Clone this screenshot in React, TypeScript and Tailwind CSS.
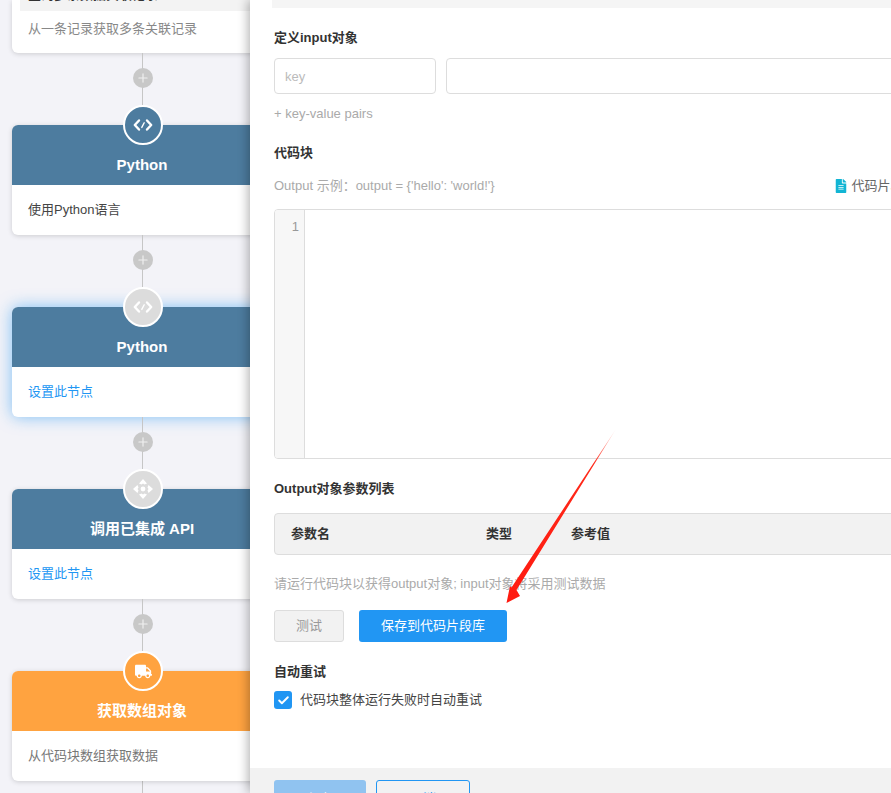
import React from 'react';
import { Check, Plus } from 'lucide-react';
import { FaFileAlt, FaTruck } from 'react-icons/fa';

const font = { fontFamily: '"Liberation Sans", "Noto Sans CJK SC", sans-serif' };

const CodeIcon = () => (
  <svg width="22" height="22" viewBox="0 0 22 22" fill="none" stroke="white" strokeWidth="2.4" strokeLinecap="round" strokeLinejoin="round">
    <path d="M7 6.5 L2.8 11 L7 15.5" />
    <path d="M15 6.5 L19.2 11 L15 15.5" />
    <path d="M12.2 8.8 L9.8 13.4" strokeWidth="1.4" />
  </svg>
);

const MoveIcon = () => (
  <svg width="22" height="22" viewBox="0 0 22 22" fill="white">
    <path d="M11 1 L15 5.5 L12.5 6.5 L11 5.5 L9.5 6.5 L7 5.5 Z" />
    <path d="M11 21 L15 16.5 L12.5 15.5 L11 16.5 L9.5 15.5 L7 16.5 Z" />
    <path d="M1 11 L5.5 7 L6.5 9.5 L5.5 11 L6.5 12.5 L5.5 15 Z" />
    <path d="M21 11 L16.5 7 L15.5 9.5 L16.5 11 L15.5 12.5 L16.5 15 Z" />
    <circle cx="11" cy="11" r="2.4" />
  </svg>
);

const Connector = () => (
  <div className="relative flex h-[72px] w-[260px] flex-col items-center">
    <div className="absolute bottom-0 left-[130px] top-0 w-px bg-[#c6c6c6]" />
    <div className="relative z-10 mt-[15px] ml-px flex h-5 w-5 items-center justify-center rounded-full bg-[#c8c8c8]">
      <Plus size={14} color="#f0f0f0" strokeWidth={2} />
    </div>
  </div>
);

type NodeProps = {
  title: string;
  desc: string;
  descClass: string;
  headClass: string;
  circleClass: string;
  icon: React.ReactNode;
  active?: boolean;
};

const FlowNode = ({ title, desc, descClass, headClass, circleClass, icon, active }: NodeProps) => (
  <div className={`relative w-[260px] rounded-md bg-white ${active ? 'shadow-[0_0_16px_rgba(33,150,243,0.55)]' : 'shadow-[0_1px_5px_rgba(0,0,0,0.16)]'}`}>
    <div className={`h-[60px] rounded-t-md pt-[31px] text-center text-[15px] font-bold leading-[18px] text-white ${headClass}`}>{title}</div>
    <div className={`flex h-[50px] items-center px-4 pb-px text-[13px] ${descClass}`}>{desc}</div>
    <div className={`absolute left-[111px] top-[-20px] flex h-10 w-10 items-center justify-center rounded-full border-2 border-white ${circleClass}`}>{icon}</div>
  </div>
);

const Label = ({ children }: { children: React.ReactNode }) => (
  <div className="h-5 text-[13px] font-bold leading-[22px] text-[#333]">{children}</div>
);

export default function App() {
  return (
    <div className="relative flex h-[793px] w-[891px] overflow-hidden bg-[#f3f3f8]" style={font}>
      {/* flow canvas */}
      <div className="w-[250px] shrink-0 pl-3">
        <div className="h-[53px] w-[260px] overflow-hidden rounded-b-md bg-white shadow-[0_1px_5px_rgba(0,0,0,0.16)]">
          <div className="ml-2 h-[11px] overflow-hidden bg-[#f3f3f3] pl-2">
            <div className="mt-[-13px] text-[13px] font-bold leading-[15px] text-[#333]">查询多条数据关联记录</div>
          </div>
          <div className="flex h-[36px] items-center px-4 text-[13px] text-[#888]">从一条记录获取多条关联记录</div>
        </div>
        <Connector />
        <FlowNode title="Python" desc="使用Python语言" descClass="text-[#444]" headClass="bg-[#4d7c9f]" circleClass="bg-[#4d7c9f]" icon={<CodeIcon />} />
        <Connector />
        <FlowNode title="Python" desc="设置此节点" descClass="text-[#2196f3]" headClass="bg-[#4d7c9f]" circleClass="bg-[#dcdcdc]" icon={<CodeIcon />} active />
        <Connector />
        <FlowNode title="调用已集成 API" desc="设置此节点" descClass="text-[#2196f3]" headClass="bg-[#4d7c9f]" circleClass="bg-[#dcdcdc]" icon={<MoveIcon />} />
        <Connector />
        <FlowNode title="获取数组对象" desc="从代码块数组获取数据" descClass="text-[#777]" headClass="bg-[#ffa340]" circleClass="bg-[#ffa340]" icon={<FaTruck size={17} color="white" />} />
        <div className="ml-[130px] h-3 w-px bg-[#c6c6c6]" />
      </div>

      {/* settings drawer */}
      <div className="relative z-10 flex h-full w-[800px] shrink-0 flex-col bg-white shadow-[-2px_0_10px_rgba(0,0,0,0.3)]">
        <div className="flex-1 pl-6">
          <div className="ml-[-2px] h-2 bg-[#f5f5f5]" />
          <div className="mt-[19px]"><Label>定义input对象</Label></div>
          <div className="mt-[11px] flex gap-[10px]">
            <div className="flex h-9 w-[162px] items-center rounded border border-[#ddd] px-[10px] pt-px text-[13px] text-[#bbb]">key</div>
            <div className="h-9 flex-1 rounded border border-[#ddd]" />
          </div>
          <div className="mt-[9px] h-5 text-[13px] leading-[22px] text-[#aaa]">+ key-value pairs</div>
          <div className="mt-[19px]"><Label>代码块</Label></div>
          <div className="mt-[13px] flex h-5 items-center pt-px text-[13px] leading-5 text-[#aaa]">
            <span>Output 示例：output = {"{'hello': 'world!'}"}</span>
            <span className="ml-[339px] flex items-center gap-[4px] text-[#666]">
              <FaFileAlt size={14} color="#12b5d4" />
              代码片段库
            </span>
          </div>
          <div className="mt-[14px] flex h-[250px] overflow-hidden rounded border border-[#ddd]">
            <div className="h-full w-[30px] border-r border-[#ddd] bg-[#f7f7f7] pr-[5px] pt-2 text-right text-[13px] leading-[18px] text-[#999]">1</div>
          </div>
          <div className="mt-[19px]"><Label>Output对象参数列表</Label></div>
          <div className="mt-[15px] flex h-[42px] items-center rounded border border-[#ddd] bg-[#f2f2f2] pb-px pl-4 text-[13px] font-bold text-[#333]">
            <span className="w-[195px]">参数名</span>
            <span className="w-[85px]">类型</span>
            <span>参考值</span>
          </div>
          <div className="mt-[19px] h-5 text-[13px] leading-5 text-[#aaa]">请运行代码块以获得output对象; input对象将采用测试数据</div>
          <div className="mt-4 flex gap-[15px]">
            <button className="h-8 w-[70px] rounded-[3px] border border-[#ddd] bg-[#f2f2f2] text-[13px] text-[#999]">测试</button>
            <button className="h-8 w-[148px] rounded-[3px] bg-[#2196f3] text-[13px] text-white">保存到代码片段库</button>
          </div>
          <div className="mt-[19px]"><Label>自动重试</Label></div>
          <div className="mt-[10px] flex h-[18px] items-center gap-2 text-[13px] text-[#444]">
            <span className="flex h-[18px] w-[18px] items-center justify-center rounded-[3px] bg-[#2196f3]">
              <Check size={13} color="white" strokeWidth={3.5} />
            </span>
            代码块整体运行失败时自动重试
          </div>
        </div>
        <div className="flex h-[25px] gap-[10px] bg-[#f2f2f2] pl-6 pt-3">
          <button className="h-[38px] w-[92px] shrink-0 rounded-[3px] bg-[#90c3f0] text-[13px] text-white">保存</button>
          <button className="h-[38px] w-[94px] shrink-0 rounded-[3px] border border-[#2196f3] text-[13px] text-[#2196f3]">取消</button>
        </div>
      </div>

      {/* red annotation arrow */}
      <svg className="absolute left-0 top-0 z-20" width="891" height="793" fill="none">
        <defs>
          <linearGradient id="arrowFade" x1="616" y1="429" x2="507" y2="603" gradientUnits="userSpaceOnUse">
            <stop offset="0" stopColor="#ff2a1a" stopOpacity="0.1" />
            <stop offset="0.2" stopColor="#ff2a1a" />
            <stop offset="1" stopColor="#ff1a10" />
          </linearGradient>
        </defs>
        <polygon points="616,429 516.5,590 520,596 506.5,603 510,586 511.5,587.5" fill="url(#arrowFade)" />
      </svg>
    </div>
  );
}
